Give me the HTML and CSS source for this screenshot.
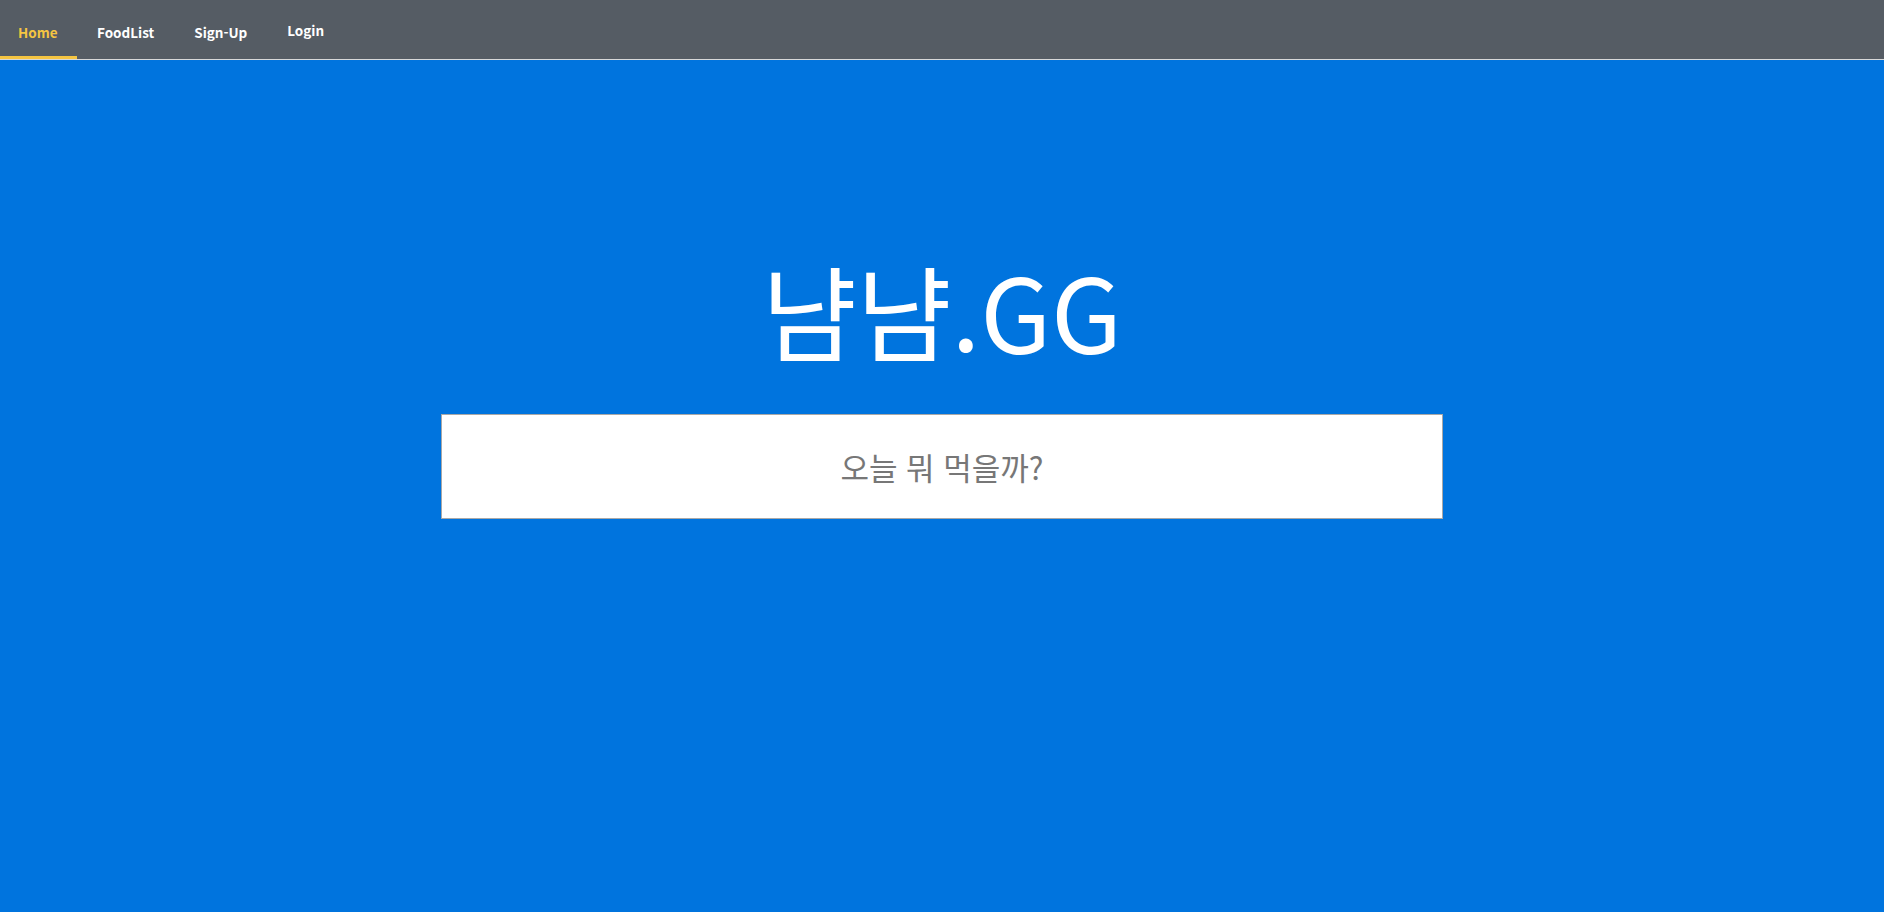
FILE: index.html
```html
<!DOCTYPE html>
<html lang="ko">
<head>
<meta charset="utf-8">
<title>냠냠.GG</title>
<link rel="stylesheet" href="styles.css">
</head>
<body>
<nav class="nav">
  <a class="nav-item active" href="#">Home</a>
  <a class="nav-item" href="#">FoodList</a>
  <a class="nav-item" href="#">Sign-Up</a>
  <a class="nav-item login" href="#">Login</a>
</nav>
<main class="hero">
  <h1 class="title">냠냠.GG</h1>
  <input class="search" type="text" placeholder="오늘 뭐 먹을까?">
</main>
</body>
</html>
```
FILE: styles.css
```css
html, body {
  margin: 0;
  padding: 0;
  height: 100%;
}
body {
  background: #0074de;
  font-family: "Noto Sans CJK KR", "Noto Sans", sans-serif;
  overflow: hidden;
}
.nav {
  display: flex;
  align-items: stretch;
  height: 59px;
  background: #555c64;
  border-bottom: 1px solid #d8d8d8;
}
.nav-item {
  display: flex;
  align-items: center;
  padding: 8px 20px 0 18px;
  margin-right: 2px;
  color: #ffffff;
  font-size: 13.5px;
  font-weight: 700;
  text-decoration: none;
  box-sizing: border-box;
  border-bottom: 3px solid transparent;
}
.nav-item.active {
  color: #f5c542;
  border-bottom-color: #f5c542;
  width: 77px;
}
.nav-item.login {
  padding-top: 4px;
}
.hero {
  display: flex;
  flex-direction: column;
  align-items: center;
}
.title {
  margin: 198px 0 0 0;
  font-size: 103px;
  font-weight: 400;
  color: #ffffff;
  line-height: 1;
  height: 156px;
}
.search {
  width: 1002px;
  height: 105px;
  box-sizing: border-box;
  border: 1px solid #a8a8a8;
  background: #ffffff;
  text-align: center;
  font-family: "Noto Sans CJK KR", sans-serif;
  font-size: 31px;
  color: #555;
  outline: none;
}
.search::placeholder {
  color: #777777;
}
```
